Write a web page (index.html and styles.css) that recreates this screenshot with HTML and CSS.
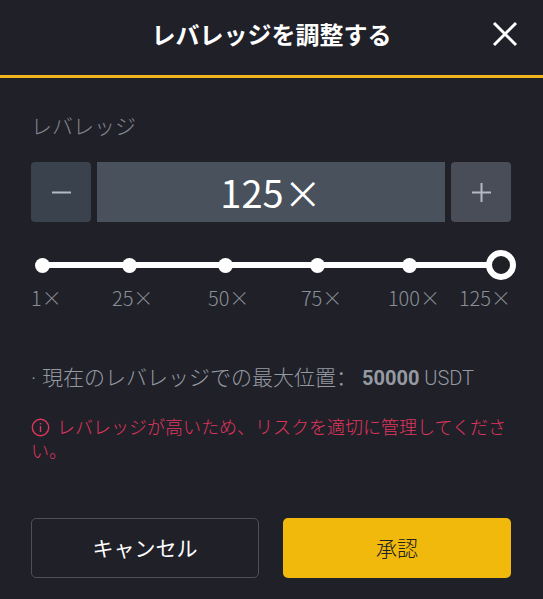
FILE: index.html
```html
<!DOCTYPE html>
<html lang="ja">
<head>
<meta charset="utf-8">
<meta name="viewport" content="width=device-width, initial-scale=1">
<title>レバレッジを調整する</title>
<link rel="stylesheet" href="styles.css">
</head>
<body>
<main class="dialog">
  <header class="header">
    <h1 class="title">レバレッジを調整する</h1>
    <button class="close" type="button" aria-label="閉じる">
      <svg width="26" height="26" viewBox="0 0 26 26" fill="none" stroke="currentColor" stroke-width="3"><path d="M2 2L24 24M24 2L2 24"/></svg>
    </button>
  </header>
  <form class="content">
    <label class="label" for="leverage">レバレッジ</label>
    <div class="stepper">
      <button class="step step-minus" type="button" aria-label="減らす">
        <svg width="20" height="20" viewBox="0 0 20 20" stroke="currentColor" stroke-width="2"><path d="M1 10.5H20"/></svg>
      </button>
      <input class="value" id="leverage" type="text" value="125×">
      <button class="step step-plus" type="button" aria-label="増やす">
        <svg width="20" height="20" viewBox="0 0 20 20" stroke="currentColor" stroke-width="2"><path d="M1 10.5H20M10.5 1V20"/></svg>
      </button>
    </div>
    <div class="slider">
      <div class="stops"><i></i><i></i><i></i><i></i><i></i></div>
      <input class="range" type="range" min="1" max="125" value="125" aria-label="レバレッジ">
    </div>
    <div class="marks">
      <span>1×</span><span>25×</span><span>50×</span><span>75×</span><span>100×</span><span>125×</span>
    </div>
    <p class="limit"><span class="bullet">·</span><span>現在のレバレッジでの最大位置<span class="colon" lang="zh-CN">：</span></span><span class="amount"><b>50000</b> USDT</span></p>
    <p class="warning"><svg class="info" width="19" height="19" viewBox="0 0 19 19" fill="none" stroke="currentColor" stroke-width="1.4"><circle cx="9.5" cy="9.5" r="8.2"/><path d="M9.5 8V14M9.5 5V6.6"/></svg>レバレッジが高いため、リスクを適切に管理してください。</p>
    <div class="actions">
      <button class="action cancel" type="button">キャンセル</button>
      <button class="action confirm" type="submit">承認</button>
    </div>
  </form>
</main>
</body>
</html>
```
FILE: styles.css
```css
* {
  box-sizing: border-box;
}

body {
  margin: 0;
  background: #1f2028;
  color: #fff;
  font-family: "Noto Sans CJK JP", sans-serif;
  font-weight: 300;
}

button,
input {
  margin: 0;
  border: 0;
  font: inherit;
  color: inherit;
}

button {
  padding: 0;
  cursor: pointer;
}

svg {
  display: block;
}

.header {
  display: grid;
  grid-template-columns: 26px 1fr 26px;
  align-items: center;
  height: 78px;
  padding: 0 25px 8px;
  border-bottom: 3px solid #f0b51c;
}

.title {
  grid-column: 2;
  margin: 0;
  font-size: 24px;
  line-height: 32px;
  font-weight: 700;
  text-align: center;
}

.close {
  background: none;
}

.content {
  padding: 31px 32px 21px 31px;
}

.label {
  display: block;
  font-size: 21px;
  line-height: 32px;
  color: #83878d;
}

.stepper {
  display: grid;
  grid-template-columns: 60px 1fr 60px;
  gap: 6px;
  height: 60px;
  margin-top: 21px;
}

.step {
  display: grid;
  place-items: center;
  border-radius: 4px;
  color: #b4bac2;
}

.step-minus {
  background: #3a424d;
}

.step-plus {
  background: #494d58;
}

.value {
  width: 100%;
  min-width: 0;
  padding: 0 0 2px;
  background: #48515c;
  font-size: 38px;
  font-weight: 400;
  text-align: center;
}

.slider {
  display: grid;
  align-items: center;
  height: 30px;
  margin: 28px -5px 0 -4px;
}

.stops,
.range {
  grid-area: 1 / 1;
}

.stops {
  display: grid;
  grid-template-columns: 87fr 96fr 92fr 92fr 92fr;
  padding: 0 22px 0 8px;
}

.stops i {
  width: 15px;
  height: 15px;
  border-radius: 50%;
  background: #fff;
}

.range {
  width: 100%;
  height: 30px;
  background: linear-gradient(#fff, #fff) center / calc(100% - 30px) 6px no-repeat;
  appearance: none;
}

.range::-webkit-slider-thumb {
  width: 30px;
  height: 30px;
  border: 6px solid #fff;
  border-radius: 50%;
  background: #1f2026;
  appearance: none;
}

.marks {
  display: grid;
  grid-template-columns: 81fr 96fr 93fr 87fr 71fr 52fr;
  margin-top: 2px;
  font-size: 20px;
  line-height: 32px;
  white-space: nowrap;
  color: #8b8f96;
}

.limit {
  display: flex;
  align-items: baseline;
  height: 32px;
  margin: 46px 0 0;
  font-size: 21px;
  line-height: 32px;
  white-space: nowrap;
  color: #959aa2;
}

.bullet {
  width: 11px;
  font-family: Roboto, sans-serif;
}

.colon {
  font-family: "Noto Sans CJK SC", sans-serif;
}

.amount {
  margin-left: 5px;
  font-family: Roboto, sans-serif;
  font-size: 20px;
}

.amount b {
  font-weight: 700;
}

.warning {
  margin: 22px 0 0;
  font-size: 18px;
  line-height: 24px;
  color: #e0355e;
}

.info {
  display: inline-block;
  margin-right: 7px;
  vertical-align: -3px;
}

.actions {
  display: grid;
  grid-template-columns: 1fr 1fr;
  gap: 24px;
  margin-top: 56px;
}

.action {
  height: 60px;
  padding-bottom: 2px;
  border-radius: 5px;
  font-size: 21px;
}

.cancel {
  border: 1px solid #505052;
  background: none;
  font-weight: 400;
}

.confirm {
  background: #f0b90b;
  color: #202124;
}
```
